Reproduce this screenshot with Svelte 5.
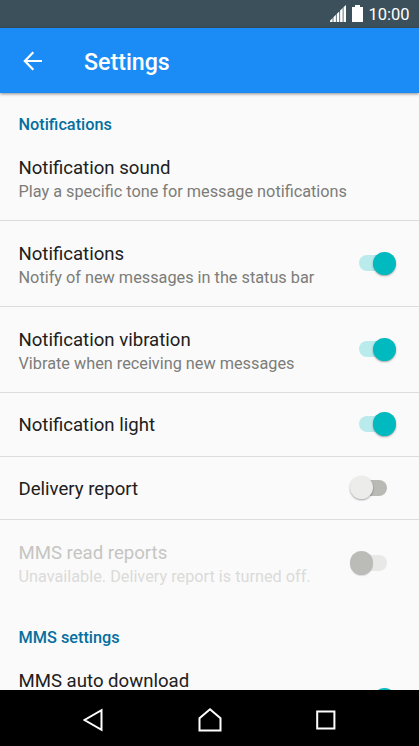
<script>
  const sections = [
    {
      heading: 'Notifications',
      rows: [
        { title: 'Notification sound', detail: 'Play a specific tone for message notifications' },
        { title: 'Notifications', detail: 'Notify of new messages in the status bar', toggle: 'on' },
        { title: 'Notification vibration', detail: 'Vibrate when receiving new messages', toggle: 'on' },
        { title: 'Notification light', toggle: 'on' },
        { title: 'Delivery report', toggle: 'off' },
        { title: 'MMS read reports', detail: 'Unavailable. Delivery report is turned off.', toggle: 'off', disabled: true }
      ]
    },
    {
      heading: 'MMS settings',
      rows: [
        { title: 'MMS auto download', toggle: 'on', extended: true }
      ]
    }
  ];
</script>

<div class="screen">
  <div class="status">
    <svg width="34" height="18" viewBox="0 0 34 18">
      <path d="M0 17V15.7L2.6 13.1V17ZM3.4 17V12.3L5.9 9.8V17ZM6.7 17V9L9.3 6.4V17ZM10.1 17V5.6L12.7 3.1V17ZM13.5 17V2.3L16 0V17Z" fill="#fff" />
      <path d="M22 2H25V0H30V2H33V17H22Z" fill="#fff" />
    </svg>
    <span>10:00</span>
  </div>

  <header>
    <svg width="20" height="20" viewBox="0 0 20 20" fill="none" stroke="#fff" stroke-width="2.2">
      <path d="M19 10H2M10.3 1.3L1.8 10L10.3 18.7" />
    </svg>
    <h1>Settings</h1>
  </header>

  <main>
    {#each sections as section}
      <section>
        <h2>{section.heading}</h2>
        {#each section.rows as row}
          <div class="row" class:tall={row.detail} class:extended={row.extended} class:disabled={row.disabled}>
            <div class="copy">
              <div class="title">{row.title}</div>
              {#if row.detail}<div class="detail">{row.detail}</div>{/if}
            </div>
            {#if row.toggle}
              <div class="switch {row.toggle}"><div class="thumb"></div></div>
            {/if}
          </div>
        {/each}
      </section>
    {/each}
  </main>

  <nav>
    <svg width="20" height="24" viewBox="0 0 20 24"><path d="M18.5 2.2V21.8L1.5 12Z" /></svg>
    <svg width="24" height="24" viewBox="0 0 24 24"><path d="M1.5 22.5V10.2L12 1.3L22.5 10.2V22.5Z" /></svg>
    <svg width="20" height="24" viewBox="0 0 20 24"><path d="M1.2 3.4H18.4V20.6H1.2Z" /></svg>
  </nav>
</div>

<style>
  .screen {
    width: 419px;
    height: 746px;
    display: flex;
    flex-direction: column;
    overflow: hidden;
    background: #fafafa;
    font-family: Roboto, sans-serif;
  }
  .status {
    flex: none;
    height: 28px;
    box-sizing: border-box;
    padding: 1px 9.5px 0 0;
    display: flex;
    justify-content: flex-end;
    align-items: center;
    gap: 4px;
    background: #3b505b;
    color: #fff;
    font-size: 16.5px;
    font-weight: 400;
  }
  .status svg {
    margin-top: -1px;
  }
  header {
    flex: none;
    height: 65px;
    padding-left: 23px;
    display: flex;
    align-items: center;
    gap: 41px;
    background: #1b8cf5;
    color: #fff;
    box-shadow: 0 1px 3px rgba(0, 0, 0, 0.45);
    z-index: 1;
  }
  h1 {
    margin: 2px 0 0;
    font-size: 23.2px;
    font-weight: 500;
  }
  main {
    flex: 1;
    min-height: 0;
    overflow: hidden;
  }
  h2 {
    box-sizing: border-box;
    height: 42px;
    margin: 0;
    padding: 19.5px 18.5px 0;
    line-height: 24px;
    font-size: 16.3px;
    font-weight: 500;
    color: #056f9e;
  }
  .row {
    height: 63.5px;
    box-sizing: border-box;
    display: flex;
    justify-content: space-between;
    align-items: center;
    padding: 0 22.5px 0 18.5px;
    border-bottom: 1px solid #dcdcdc;
  }
  .row.tall {
    height: 86px;
  }
  .row.extended {
    height: 104px;
  }
  .row:last-child {
    border-bottom: 0;
  }
  .copy {
    align-self: flex-start;
    padding-top: 20px;
  }
  .tall .copy,
  .extended .copy {
    padding-top: 21px;
  }
  .title {
    line-height: 24px;
    font-size: 18.6px;
    color: #20201c;
    white-space: nowrap;
  }
  .detail {
    line-height: 24px;
    font-size: 16.27px;
    color: #7c7c79;
    white-space: nowrap;
  }
  .disabled .title {
    color: #c5c5c2;
  }
  .disabled .detail {
    color: #dbdbd9;
  }
  .switch {
    flex: none;
    width: 28px;
    height: 16px;
    border-radius: 8px;
    margin: 0 10px 0.5px 0;
    display: flex;
    align-items: center;
    background: #b9b9b6;
  }
  .thumb {
    flex: none;
    width: 23.5px;
    height: 23.5px;
    border-radius: 50%;
    margin-left: -9px;
    background: #ececea;
    box-shadow: 0 1px 2px rgba(0, 0, 0, 0.35);
  }
  .switch.on {
    background: #b9eaec;
  }
  .on .thumb {
    margin-left: 14px;
    background: #00bac0;
  }
  .disabled .switch {
    background: #e8e8e7;
  }
  .disabled .thumb {
    background: #bbbbb8;
    box-shadow: 0 1px 1px rgba(0, 0, 0, 0.12);
  }
  nav {
    flex: none;
    height: 56px;
    box-sizing: border-box;
    padding: 3px 83px 0;
    display: flex;
    justify-content: space-between;
    align-items: center;
    background: #000;
    z-index: 1;
  }
  nav svg {
    fill: none;
    stroke: #fff;
    stroke-width: 2;
  }
</style>
